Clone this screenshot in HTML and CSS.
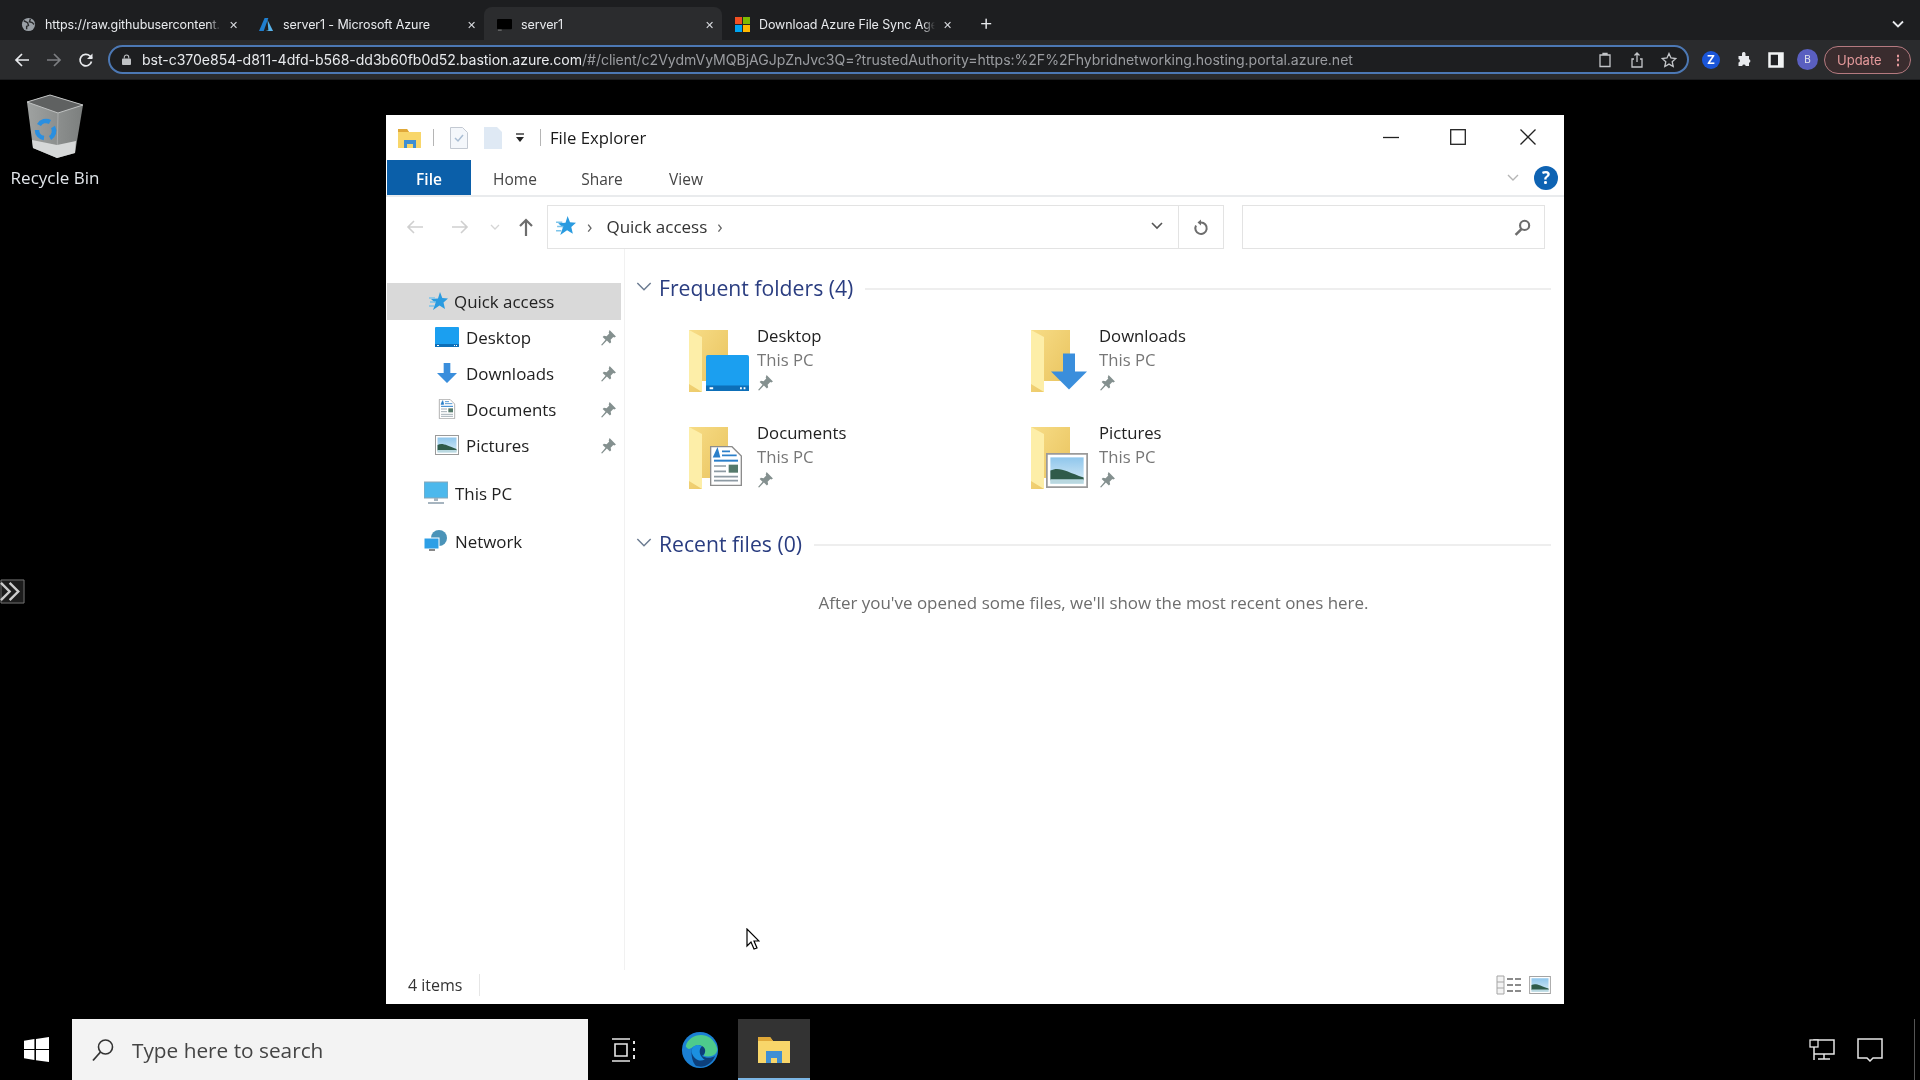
FILE: index.html
```html
<!DOCTYPE html>
<html>
<head>
    <meta charset="utf-8" />
    <title>server1</title>
    <link rel="stylesheet" href="styles.css">
</head>
<body>
    <svg class="defs" width="0" height="0">
        <defs>
            <linearGradient id="folderback" x1="0" y1="0" x2="1" y2="1">
                <stop offset="0" stop-color="#f7dc86"/>
                <stop offset="1" stop-color="#e8c25c"/>
            </linearGradient>
            <linearGradient id="sky" x1="0" y1="0" x2="0" y2="1">
                <stop offset="0" stop-color="#8fc6ec"/>
                <stop offset="1" stop-color="#d8ecf6"/>
            </linearGradient>
            <linearGradient id="binbody" x1="0" y1="0" x2="1" y2="0">
                <stop offset="0" stop-color="#9fa2a1"/>
                <stop offset="1" stop-color="#7c7f7e"/>
            </linearGradient>
            <symbol id="pin" viewBox="0 0 16 16">
                <path d="M9 1l6 6-1.500 1-1-.5-2.500 2.500.5 2.500-1.200 1.200-2.800-2.800L2 15.500 1 15l4.200-4.800-2.700-2.700L3.700 6.300l2.500.5 2.500-2.500-.5-1z" fill="#84908f"/>
            </symbol>
            <symbol id="star" viewBox="0 0 20 20">
                <path d="M12 0l2.300 6 5.700.5-4.500 4 1.500 6.500-5.500-3.500L5 18l2.500-7L3 7l7-.5z" fill="#2a9be0"/>
                <path d="M1 6h6M2 10h6M1 14h5" stroke="#7cc4ea" stroke-width="1.500"/>
            </symbol>
            <symbol id="bigfolder" viewBox="0 0 62 62">
                <path d="M1 0h39v51H14v11H1z" fill="url(#folderback)"/>
                <path d="M1 0l13 7v55L1 54z" fill="#fdeea8"/>
            </symbol>
            <symbol id="picture" viewBox="0 0 24 20">
                <rect x=".5" y=".5" width="23" height="19" fill="#fff" stroke="#9a9a9a"/>
                <rect x="2.500" y="2.500" width="19" height="15" fill="url(#sky)"/>
                <path d="M2.500 10c5-2.500 9 .5 19 4v1.500h-19z" fill="#2f5b4a"/>
                <path d="M2.500 15h19v2.500h-19z" fill="#b9d8e0"/>
            </symbol>
            <symbol id="document" viewBox="0 0 24 30">
                <path d="M.5.5h16l7 7v22H.5z" fill="#fff" stroke="#8c8c8c"/>
                <path d="M3 8l2.500-5.500L7 8H3zM9 4h6M9 7h11" stroke="#2b7fc9" stroke-width="1.200" fill="#2b7fc9"/>
                <path d="M3 11h18" stroke="#2b7fc9" stroke-width="1.500"/>
                <path d="M3 15h9M3 19h9M3 23h18M3 26h18" stroke="#8d9aa3" stroke-width="1.200"/>
                <rect x="14" y="14" width="7" height="6" fill="#557a6b"/>
            </symbol>
            <symbol id="desk" viewBox="0 0 24 20">
                <rect width="24" height="20" rx="1" fill="#1b9ff0"/>
                <path d="M0 17h24v3H0z" fill="#0d6fb8"/>
                <path d="M2 18.500h2M19 18.500h1M21 18.500h1" stroke="#fff"/>
            </symbol>
            <symbol id="down" viewBox="0 0 24 24">
                <path d="M8 0h8v12h8L12 24 0 12h8z" fill="#3a8edc"/>
            </symbol>
        </defs>
    </svg>

    <div class="chrome">
        <div class="tabstrip">
            <div class="tab">
                <svg class="fav" viewBox="0 0 16 16"><circle cx="8" cy="8" r="7" fill="#9aa0a6"/><path d="M3 4l4 2 1 3-2 1v3M10 2l-1 3 3 1 2 2" stroke="#2a2b2d" stroke-width="1.500" fill="none"/></svg>
                <span class="tabtitle tabfade">https://raw.githubusercontent.</span>
                <span class="tabx">✕</span>
            </div>
            <div class="tab">
                <svg class="fav" viewBox="0 0 16 16"><path d="M6 1h4l-5 14H0z" fill="#1f7fd0"/><path d="M9 3l6 12H7l3-1z" fill="#58b3ea"/></svg>
                <span class="tabtitle">server1 - Microsoft Azure</span>
                <span class="tabx">✕</span>
            </div>
            <div class="tab tab-active">
                <svg class="fav" viewBox="0 0 16 16"><rect y="2" width="16" height="11" rx="1" fill="#000"/><path d="M1 14h4" stroke="#888"/></svg>
                <span class="tabtitle">server1</span>
                <span class="tabx">✕</span>
            </div>
            <div class="tab">
                <svg class="fav" viewBox="0 0 16 16"><rect width="7.500" height="7.500" fill="#f25022"/><rect x="8.500" width="7.500" height="7.500" fill="#7fba00"/><rect y="8.500" width="7.500" height="7.500" fill="#00a4ef"/><rect x="8.500" y="8.500" width="7.500" height="7.500" fill="#ffb900"/></svg>
                <span class="tabtitle tabfade">Download Azure File Sync Age</span>
                <span class="tabx">✕</span>
            </div>
            <span class="newtab">+</span>
            <svg class="tablist" viewBox="0 0 12 8"><path d="M1 1.500l5 5 5-5" stroke="#e8eaed" stroke-width="1.800" fill="none"/></svg>
        </div>
        <div class="toolbar">
            <svg class="tbicon" viewBox="0 0 16 16"><path d="M15 8H2M8 2L2 8l6 6" stroke="#e8eaed" stroke-width="1.700" fill="none"/></svg>
            <svg class="tbicon" viewBox="0 0 16 16"><path d="M1 8h13M8 2l6 6-6 6" stroke="#7d7f82" stroke-width="1.700" fill="none"/></svg>
            <svg class="tbicon" viewBox="0 0 16 16"><path d="M13.500 9.500A5.800 5.800 0 1 1 12 4l2 2" stroke="#e8eaed" stroke-width="1.700" fill="none"/><path d="M14.500 1.500v5.500H9z" fill="#e8eaed"/></svg>
            <div class="omnibox">
                <svg class="lock" viewBox="0 0 10 12"><path d="M2.500 5V3.500a2.500 2.500 0 0 1 5 0V5" stroke="#c0c2c5" fill="none" stroke-width="1.200"/><rect y="5" width="10" height="7" rx="1" fill="#c0c2c5"/></svg>
                <span class="url">bst-c370e854-d811-4dfd-b568-dd3b60fb0d52.bastion.azure.com<span class="urlrest">/#/client/c2VydmVyMQBjAGJpZnJvc3Q=?trustedAuthority=https:%2F%2Fhybridnetworking.hosting.portal.azure.net</span></span>
                <div class="omniicons">
                    <svg viewBox="0 0 16 16"><path d="M3 3h10v11.500H3zM6 3V1.500h4V3" stroke="#c4c6c9" stroke-width="1.300" fill="none"/></svg>
                    <svg viewBox="0 0 16 16"><path d="M5 7H3v8h10V7h-2M8 10V1M5.500 3.500L8 1l2.500 2.500" stroke="#c4c6c9" stroke-width="1.300" fill="none"/></svg>
                    <svg viewBox="0 0 16 16"><path d="M8 1.500l2 4.500 4.800.5-3.600 3.200 1 4.800L8 12.100l-4.200 2.400 1-4.800L1.200 6.500 6 6z" stroke="#c4c6c9" stroke-width="1.300" fill="none"/></svg>
                </div>
            </div>
            <div class="exts">
                <span class="zext">Z</span>
                <svg viewBox="0 0 16 16"><path d="M6 1.500a1.800 1.800 0 0 1 3.500 0V4h3.500v3.200a1.800 1.800 0 0 1 0 3.500V14H9.700a1.800 1.800 0 0 0-3.500 0H2.500v-3.500a1.800 1.800 0 0 0 0-3.500V4H6z" fill="#e8eaed"/></svg>
                <svg viewBox="0 0 16 16"><rect x="1.500" y="1.500" width="13" height="13" fill="#202124" stroke="#f1f3f4" stroke-width="2.500"/><rect x="10" y="1" width="5" height="14" fill="#f1f3f4"/></svg>
                <span class="avatar">B</span>
            </div>
            <div class="update">Update<span class="dots">⋮</span></div>
        </div>
    </div>

    <div class="desktop">
        <div class="recycle">
            <svg class="binicon" viewBox="0 0 60 68">
                <path d="M2 9L25 2l33 10-8 48-18 5-24-10z" fill="url(#binbody)"/>
                <path d="M2 9L25 2l33 10-25 8z" fill="#5f6161" stroke="#c0c2c2"/>
                <path d="M33 20l-1 45" stroke="#a9abab"/>
                <path d="M7 47l25 5 19-4-1 12-18 5-24-10z" fill="#d6d8d8"/>
                <path d="M14 32a8 8 0 0 1 11-3M28 34a8 8 0 0 1-3 11M19 45a8 8 0 0 1-7-8" stroke="#2a8fe0" stroke-width="4.500" fill="none"/>
            </svg>
            <span>Recycle Bin</span>
        </div>
        <svg class="sidetab" viewBox="0 0 26 26"><path d="M1 1h24v24H1z" fill="#1c1c1c" stroke="#777"/><path d="M1 4l9 9-9 9M10 4l9 9-9 9" stroke="#ccc" stroke-width="2.500" fill="none"/></svg>

        <div class="explorer">
            <div class="titlebar">
                <svg class="appicon" viewBox="0 0 24 20"><path d="M0 1h9l2 3h12v16H0z" fill="#f8d66a"/><path d="M0 1h9l2 3H0z" fill="#e0a838"/><path d="M6 20v-8h12v8h-3v-4H9v4z" fill="#3f8fd4"/></svg>
                <span class="tsep"></span>
                <svg class="qat" viewBox="0 0 18 22"><path d="M.5.5h12l5 5v16H.5z" fill="#f4f7fb" stroke="#c3c9d2"/><path d="M5 11l3 3 5-6" stroke="#a9bdd3" stroke-width="1.500" fill="none"/></svg>
                <svg class="qat qat2" viewBox="0 0 18 22"><path d="M0 0h13l5 5v17H0z" fill="#dfe9f4"/></svg>
                <svg class="qatdrop" viewBox="0 0 10 10"><path d="M1 1h8" stroke="#222" stroke-width="1.300"/><path d="M1 4h8L5 9z" fill="#222"/></svg>
                <span class="tsep tsep2"></span>
                <span class="wintitle">File Explorer</span>
                <div class="wincontrols">
                    <svg viewBox="0 0 16 16"><path d="M0 8.500h16" stroke="#222" stroke-width="1.300"/></svg>
                    <svg viewBox="0 0 16 16"><rect x=".7" y=".7" width="14.600" height="14.600" fill="none" stroke="#222" stroke-width="1.300"/></svg>
                    <svg class="winclose" viewBox="0 0 16 16"><path d="M.5.5l15 15M15.500.5l-15 15" stroke="#222" stroke-width="1.300"/></svg>
                </div>
            </div>
            <div class="ribbon">
                <span class="rtab rtab-file">File</span>
                <span class="rtab rtab-home">Home</span>
                <span class="rtab rtab-share">Share</span>
                <span class="rtab rtab-view">View</span>
                <svg class="collapse" viewBox="0 0 12 8"><path d="M1 1l5 5 5-5" stroke="#b5b5b5" stroke-width="1.400" fill="none"/></svg>
                <span class="help">?</span>
            </div>
            <div class="addressrow">
                <svg class="nav nav-back" viewBox="0 0 18 16"><path d="M17 8H2M8 2L2 8l6 6" stroke="#cfcfcf" stroke-width="1.600" fill="none"/></svg>
                <svg class="nav nav-fwd" viewBox="0 0 18 16"><path d="M1 8h15M10 2l6 6-6 6" stroke="#cfcfcf" stroke-width="1.600" fill="none"/></svg>
                <svg class="nav nav-drop" viewBox="0 0 10 6"><path d="M1 1l4 4 4-4" stroke="#d5d5d5" stroke-width="1.300" fill="none"/></svg>
                <svg class="nav nav-up" viewBox="0 0 16 18"><path d="M8 18V2M2 8l6-6 6 6" stroke="#6d6d6d" stroke-width="2.200" fill="none"/></svg>
                <div class="addressbox">
                    <svg class="crumbstar"><use href="#star"/></svg>
                    <span class="crumbsep">›</span>
                    <span class="crumb">Quick access</span>
                    <span class="crumbsep crumbsep2">›</span>
                    <svg class="addrdrop" viewBox="0 0 12 8"><path d="M1 1l5 5 5-5" stroke="#555" stroke-width="1.600" fill="none"/></svg>
                </div>
                <div class="refreshbox">
                    <svg viewBox="0 0 16 16"><path d="M8 3A5.700 5.700 0 1 1 3 6" stroke="#6d6d6d" stroke-width="2" fill="none"/><path d="M8 0v6L4.500 3z" fill="#6d6d6d"/></svg>
                </div>
                <div class="searchbox">
                    <svg viewBox="0 0 16 16"><circle cx="10" cy="6" r="4.300" stroke="#6d6d6d" stroke-width="2" fill="none"/><path d="M7 9.500L1.500 15" stroke="#6d6d6d" stroke-width="2.400"/></svg>
                </div>
            </div>
            <div class="panes">
                <div class="navpane">
                    <div class="navitem navitem-sel">
                        <svg class="navicon navicon-star"><use href="#star"/></svg>
                        <span>Quick access</span>
                    </div>
                    <div class="navitem navitem-sub">
                        <svg class="navicon"><use href="#desk"/></svg>
                        <span>Desktop</span>
                        <svg class="navpin"><use href="#pin"/></svg>
                    </div>
                    <div class="navitem navitem-sub">
                        <svg class="navicon"><use href="#down"/></svg>
                        <span>Downloads</span>
                        <svg class="navpin"><use href="#pin"/></svg>
                    </div>
                    <div class="navitem navitem-sub">
                        <svg class="navicon"><use href="#document"/></svg>
                        <span>Documents</span>
                        <svg class="navpin"><use href="#pin"/></svg>
                    </div>
                    <div class="navitem navitem-sub">
                        <svg class="navicon"><use href="#picture"/></svg>
                        <span>Pictures</span>
                        <svg class="navpin"><use href="#pin"/></svg>
                    </div>
                    <div class="navitem navitem-top">
                        <svg class="navicon navicon-pc" viewBox="0 0 24 24"><rect y="1" width="24" height="16" fill="#4cb8ec" stroke="#8aa6b6"/><path d="M10 17h4v3h-4zM4 21h16v2H4z" fill="#a6b4bf"/></svg>
                        <span>This PC</span>
                    </div>
                    <div class="navitem navitem-top navitem-net">
                        <svg class="navicon navicon-pc" viewBox="0 0 24 24"><circle cx="15" cy="9" r="8" fill="#4a93b8"/><rect y="9" width="15" height="11" fill="#2d9fe6" stroke="#fff"/><path d="M5 21h6" stroke="#888" stroke-width="2"/></svg>
                        <span>Network</span>
                    </div>
                </div>
                <div class="content">
                    <div class="grouphead">
                        <svg viewBox="0 0 14 9"><path d="M1 1l6 6 6-6" stroke="#6a7a90" stroke-width="1.300" fill="none"/></svg>
                        <span>Frequent folders (4)</span>
                        <i></i>
                    </div>
                    <div class="tiles">
                        <div class="tile">
                            <div class="tileicon">
                                <svg class="tfolder"><use href="#bigfolder"/></svg>
                                <svg class="over over-desk"><use href="#desk"/></svg>
                            </div>
                            <div class="tiletext"><b>Desktop</b><span>This PC</span><svg class="tilepin"><use href="#pin"/></svg></div>
                        </div>
                        <div class="tile">
                            <div class="tileicon">
                                <svg class="tfolder"><use href="#bigfolder"/></svg>
                                <svg class="over over-down"><use href="#down"/></svg>
                            </div>
                            <div class="tiletext"><b>Downloads</b><span>This PC</span><svg class="tilepin"><use href="#pin"/></svg></div>
                        </div>
                        <div class="tile">
                            <div class="tileicon">
                                <svg class="tfolder"><use href="#bigfolder"/></svg>
                                <svg class="over over-doc"><use href="#document"/></svg>
                            </div>
                            <div class="tiletext"><b>Documents</b><span>This PC</span><svg class="tilepin"><use href="#pin"/></svg></div>
                        </div>
                        <div class="tile">
                            <div class="tileicon">
                                <svg class="tfolder"><use href="#bigfolder"/></svg>
                                <svg class="over over-pic"><use href="#picture"/></svg>
                            </div>
                            <div class="tiletext"><b>Pictures</b><span>This PC</span><svg class="tilepin"><use href="#pin"/></svg></div>
                        </div>
                    </div>
                    <div class="grouphead grouphead-recent">
                        <svg viewBox="0 0 14 9"><path d="M1 1l6 6 6-6" stroke="#6a7a90" stroke-width="1.300" fill="none"/></svg>
                        <span>Recent files (0)</span>
                        <i></i>
                    </div>
                    <p class="emptymsg">After you've opened some files, we'll show the most recent ones here.</p>
                </div>
            </div>
            <div class="statusbar">
                <span class="itemcount">4 items</span>
                <svg class="viewicon" viewBox="0 0 26 20"><path d="M1 1h7v18H1zM1 7h7M1 13h7" stroke="#a5a5a5" fill="#f3f3f3"/><path d="M11 4h6M19 4h6M11 10h6M19 10h6M11 16h6M19 16h6" stroke="#666" stroke-width="1.500"/></svg>
                <svg class="viewicon viewicon-pic"><use href="#picture"/></svg>
            </div>
            <svg class="cursor" viewBox="0 0 14 22"><path d="M1 1v17l4-4 3 7 3-1-3-7h5z" fill="#fff" stroke="#000" stroke-width="1.200"/></svg>
        </div>
    </div>

    <div class="taskbar">
        <svg class="winlogo" viewBox="0 0 24 24"><path d="M0 3.500l10-1.500v9.500H0zM11.500 1.800L24 0v11.500H11.500zM0 12.500h10V22L0 20.500zM11.500 12.500H24V24l-12.500-1.800z" fill="#fff"/></svg>
        <div class="tasksearch">
            <svg viewBox="0 0 24 24"><circle cx="14.500" cy="9" r="7" fill="none" stroke="#333" stroke-width="1.600"/><path d="M9.500 14L2 22.500" stroke="#333" stroke-width="1.800"/></svg>
            <span>Type here to search</span>
        </div>
        <svg class="taskview" viewBox="0 0 26 24"><path d="M1 1h18M1 23h18M4 6h12v12H4z" stroke="#e6e6e6" stroke-width="1.600" fill="none"/><path d="M23 3v3M23 10v3M23 17v4" stroke="#e6e6e6" stroke-width="2"/></svg>
        <svg class="edge" viewBox="0 0 40 40">
            <circle cx="20" cy="20" r="19" fill="#1b80d4"/>
            <path d="M5 16C8 2 32-2 38 18c1 8-8 10-14 8 4-8-6-14-13-8-3 2-5 0-6-2z" fill="#4ecb8c"/>
            <path d="M11 22c0-7 8-9 13-5 3 3 1 8-2 9 4 3 10 3 14 0-4 10-14 14-21 10-3-4-4-9-4-14z" fill="#0d3f7a"/>
            <path d="M22 16c-5-3-11 0-11 6 2 7 8 11 14 8-4-2-8-9-3-14z" fill="#1b90e0"/>
        </svg>
        <div class="taskapp">
            <svg viewBox="0 0 32 28"><path d="M0 2h12l3 4h17v22H0z" fill="#f8d66a"/><path d="M0 2h12l3 4H0z" fill="#e0a838"/><path d="M8 28V16h16v12h-5v-5h-6v5z" fill="#3f8fd4"/></svg>
        </div>
        <svg class="traynet" viewBox="0 0 26 24"><path d="M5 2h20v14H5zM15 16v5M9 21h12M5 8v14" stroke="#e6e6e6" stroke-width="1.500" fill="none"/><rect x="1" y="2" width="8" height="7" fill="#000" stroke="#e6e6e6" stroke-width="1.300"/></svg>
        <svg class="traynote" viewBox="0 0 26 24"><path d="M1 1h24v19h-9l-3 3-3-3H1z" stroke="#e6e6e6" stroke-width="1.500" fill="none"/></svg>
        <span class="showdesk"></span>
    </div>
</body>
</html>
```

FILE: styles.css
```css
*
{
    box-sizing: border-box;
}

html, body
{
    margin: 0;
    height: 100%;
}

body
{
    width: 1920px;
    height: 1080px;
    overflow: hidden;
    display: flex;
    flex-direction: column;
    background: #000;
    font-family: "Open Sans", "Noto Sans", sans-serif;
    filter: blur(.4px);
}

.defs
{
    position: absolute;
}

/* browser */
.chrome
{
    height: 80px;
    flex: none;
    font-family: "Inter", "Liberation Sans", sans-serif;
    color: #e8eaed;
    background: #1d1e20;
}

.tabstrip
{
    height: 40px;
    padding: 7px 0 0 8px;
    display: flex;
    align-items: stretch;
    background: #1d1e20;
}

.tab
{
    width: 238px;
    display: flex;
    align-items: center;
    padding: 2px 8px 0 13px;
    border-radius: 8px 8px 0 0;
    font-size: 12.500px;
    letter-spacing: -.1px;
}

.tab-active
{
    background: #2b2c2e;
}

.fav
{
    width: 15px;
    height: 15px;
    flex: none;
    margin-right: 9px;
}

.tabtitle
{
    flex: 1;
    overflow: hidden;
    white-space: nowrap;
}

.tabfade
{
    -webkit-mask-image: linear-gradient(to right, #000 93%, transparent);
    mask-image: linear-gradient(to right, #000 93%, transparent);
}

.tabx
{
    font-size: 11px;
    margin-left: 8px;
    color: #d8dade;
}

.newtab
{
    margin-left: 19px;
    font-size: 22px;
    line-height: 30px;
    font-weight: 300;
}

.tablist
{
    width: 12px;
    height: 8px;
    margin: 13px 16px 0 auto;
}

.toolbar
{
    height: 39px;
    display: flex;
    align-items: center;
    padding-left: 14px;
    background: #2a2b2d;
}

.tbicon
{
    width: 16px;
    height: 16px;
    margin-right: 16px;
    flex: none;
}

.omnibox
{
    width: 1581px;
    height: 29px;
    margin-left: -2px;
    display: flex;
    align-items: center;
    padding: 0 10px 0 12px;
    border: 2px solid #4c78b4;
    border-radius: 15px;
    background: #1d1e20;
}

.lock
{
    width: 9px;
    height: 11px;
    margin-right: 11px;
}

.url
{
    font-size: 14.100px;
    white-space: nowrap;
    overflow: hidden;
    letter-spacing: -.06px;
}

.urlrest
{
    color: #9a9ca0;
}

.omniicons
{
    margin-left: auto;
    display: flex;
    gap: 16px;
    flex: none;
}

.omniicons svg
{
    width: 16px;
    height: 16px;
}

.exts
{
    width: 135px;
    display: flex;
    align-items: center;
    gap: 16px;
    padding-left: 14px;
    flex: none;
}

.exts svg
{
    width: 16px;
    height: 16px;
}

.zext
{
    width: 18px;
    height: 18px;
    margin-left: -1px;
    border-radius: 50%;
    background: #1a55d8;
    color: #fff;
    font-size: 12px;
    font-weight: 700;
    line-height: 18px;
    text-align: center;
}

.avatar
{
    width: 21px;
    height: 21px;
    margin-left: -3px;
    border-radius: 50%;
    background: #5a5fc0;
    font-size: 10px;
    line-height: 21px;
    text-align: center;
}

.update
{
    width: 87px;
    height: 28px;
    display: flex;
    align-items: center;
    justify-content: space-between;
    padding: 0 5px 0 12px;
    border: 1px solid #b57a80;
    border-radius: 14px;
    background: #3a2c2e;
    color: #e59a9c;
    font-size: 13px;
    flex: none;
}

.dots
{
    font-size: 14px;
    font-weight: 700;
}

/* desktop */
.desktop
{
    flex: 1;
    position: relative;
    background: #000;
}

.recycle
{
    position: absolute;
    left: 0;
    top: 13px;
    width: 110px;
    text-align: center;
    color: #e2e6ea;
    font-size: 17px;
}

.binicon
{
    width: 60px;
    height: 68px;
    display: block;
    margin: 0 0 5px 25px;
}

.sidetab
{
    position: absolute;
    left: 0;
    top: 499px;
    width: 25px;
    height: 25px;
}

.explorer
{
    position: absolute;
    left: 386px;
    top: 35px;
    width: 1178px;
    height: 889px;
    display: flex;
    flex-direction: column;
    background: #fff;
    color: #1a1a1a;
}

.titlebar
{
    height: 45px;
    flex: none;
    display: flex;
    align-items: center;
    padding-left: 12px;
}

.appicon
{
    width: 24px;
    height: 20px;
}

.tsep
{
    width: 1px;
    height: 17px;
    margin: 0 16px 0 11px;
    background: #b5b5b5;
}

.tsep2
{
    margin: 0 9px 0 15px;
}

.qat
{
    width: 18px;
    height: 22px;
}

.qat2
{
    margin-left: 16px;
}

.qatdrop
{
    width: 10px;
    height: 10px;
    margin-left: 13px;
}

.wintitle
{
    font-size: 16.700px;
}

.wincontrols
{
    margin-left: auto;
    display: flex;
    gap: 51px;
    padding-right: 28px;
    margin-top: -1px;
}

.wincontrols svg
{
    width: 16px;
    height: 16px;
}

.wincontrols .winclose
{
    margin-left: 3px;
}

.ribbon
{
    height: 37px;
    flex: none;
    display: flex;
    align-items: center;
    border-bottom: 2px solid #e9ebed;
    font-size: 15.500px;
    color: #444;
}

.rtab
{
    height: 100%;
    padding-top: 3px;
    display: flex;
    align-items: center;
    justify-content: center;
}

.rtab-file
{
    width: 84px;
    margin-left: 1px;
    background: #0b5fa9;
    color: #fff;
    font-weight: 600;
}

.rtab-home
{
    width: 88px;
}

.rtab-share
{
    width: 86px;
}

.rtab-view
{
    width: 82px;
}

.collapse
{
    width: 12px;
    height: 8px;
    margin-left: auto;
}

.help
{
    width: 24px;
    height: 24px;
    margin: 0 6px 0 15px;
    border-radius: 50%;
    background: #0e63b3;
    color: #fff;
    font-size: 17px;
    font-weight: 700;
    line-height: 24px;
    text-align: center;
}

.addressrow
{
    height: 44px;
    margin-top: 8px;
    flex: none;
    display: flex;
    align-items: center;
}

.nav
{
    flex: none;
}

.nav-back
{
    width: 18px;
    height: 16px;
    margin-left: 20px;
}

.nav-fwd
{
    width: 18px;
    height: 16px;
    margin-left: 27px;
}

.nav-drop
{
    width: 10px;
    height: 6px;
    margin-left: 21px;
}

.nav-up
{
    width: 16px;
    height: 18px;
    margin-left: 18px;
}

.addressbox
{
    width: 632px;
    height: 100%;
    margin-left: 13px;
    display: flex;
    align-items: center;
    border: 1px solid #e3e3e3;
    padding: 0 0 2px 7px;
    font-size: 17px;
    color: #333;
}

.crumbstar
{
    width: 21px;
    height: 21px;
}

.crumbsep
{
    margin: 0 14px 0 11px;
    color: #666;
    font-size: 18px;
}

.crumbsep2
{
    margin-left: 10px;
}

.addrdrop
{
    width: 12px;
    height: 8px;
    margin-left: auto;
    margin-right: 15px;
}

.refreshbox
{
    width: 45px;
    height: 100%;
    display: flex;
    align-items: center;
    justify-content: center;
    border: 1px solid #e3e3e3;
    border-left: 0;
}

.refreshbox svg
{
    width: 16px;
    height: 17px;
}

.searchbox
{
    width: 303px;
    height: 100%;
    margin-left: 18px;
    display: flex;
    align-items: center;
    justify-content: flex-end;
    padding-right: 13px;
    border: 1px solid #e3e3e3;
}

.searchbox svg
{
    width: 17px;
    height: 17px;
}

.panes
{
    flex: 1;
    display: flex;
    min-height: 0;
}

.navpane
{
    width: 239px;
    flex: none;
    padding: 34px 4px 0 1px;
    border-right: 1px solid #f1f1f1;
    font-size: 16.900px;
    color: #222;
}

.navitem
{
    height: 36px;
    display: flex;
    align-items: center;
}

.navitem-sel
{
    height: 37px;
    margin: 0 -1px -1px 0;
    padding-left: 41px;
    background: #d9d9d9;
}

.navitem-sub
{
    padding-left: 48px;
}

.navitem-top
{
    height: 38px;
    margin-top: 11px;
    padding-left: 37px;
}

.navitem-net
{
    margin-top: 10px;
}

.navicon
{
    width: 24px;
    height: 20px;
    margin-right: 7px;
    flex: none;
}

.navicon-star
{
    width: 20px;
    margin-right: 6px;
}

.navicon-pc
{
    width: 24px;
    height: 24px;
    margin-right: 7px;
}

.navpin
{
    width: 17px;
    height: 17px;
    margin-left: auto;
    margin-right: 3px;
}

.content
{
    flex: 1;
    padding: 24px 13px 0 11px;
}

.grouphead
{
    height: 28px;
    display: flex;
    align-items: center;
    color: #2a3d80;
    font-size: 21.200px;
}

.grouphead svg
{
    width: 16px;
    height: 10px;
    margin-right: 7px;
}

.grouphead i
{
    flex: 1;
    height: 2px;
    margin: 4px 0 0 12px;
    background: #eeeeee;
}

.grouphead-recent
{
    margin-top: 22px;
}

.tiles
{
    display: grid;
    grid-template-columns: 342px 342px;
    grid-auto-rows: 97px;
    margin-top: 12px;
    padding-left: 52px;
    padding-top: 11px;
    margin-bottom: -11px;
}

.tile
{
    display: flex;
    gap: 8px;
}

.tileicon
{
    position: relative;
    width: 61px;
    height: 62px;
    flex: none;
    margin-top: 6px;
}

.tfolder
{
    width: 62px;
    height: 62px;
    display: block;
}

.over
{
    position: absolute;
}

.over-desk
{
    left: 18px;
    top: 24px;
    width: 43px;
    height: 38px;
}

.over-down
{
    left: 21px;
    top: 22px;
    width: 36px;
    height: 39px;
}

.over-doc
{
    left: 22px;
    top: 18px;
    width: 32px;
    height: 42px;
}

.over-pic
{
    left: 15px;
    top: 26px;
    width: 44px;
    height: 35px;
}

.tiletext
{
    display: flex;
    flex-direction: column;
    font-size: 16.700px;
    line-height: 24px;
    color: #222;
}

.tiletext b
{
    font-weight: 400;
}

.tiletext span
{
    color: #777;
}

.tilepin
{
    width: 17px;
    height: 17px;
    margin-top: 2px;
}

.emptymsg
{
    margin: 34px 0 0;
    text-align: center;
    color: #6d6d6d;
    font-size: 16.950px;
}

.statusbar
{
    height: 34px;
    flex: none;
    display: flex;
    align-items: center;
    padding: 0 13px 5px 22px;
    font-size: 16px;
    color: #333;
}

.itemcount
{
    padding-right: 17px;
    margin-right: auto;
    border-right: 1px solid #e6e6e6;
}

.viewicon
{
    width: 26px;
    height: 20px;
    margin-left: 7px;
}

.viewicon-pic
{
    width: 22px;
    height: 18px;
}

.cursor
{
    position: absolute;
    left: 360px;
    top: 813px;
    width: 14px;
    height: 22px;
}

/* taskbar */
.taskbar
{
    height: 61px;
    flex: none;
    display: flex;
    align-items: center;
    position: relative;
    background: #000;
}

.winlogo
{
    width: 25px;
    height: 25px;
    margin-left: 24px;
}

.tasksearch
{
    width: 516px;
    height: 100%;
    margin-left: 23px;
    display: flex;
    align-items: center;
    padding-left: 19px;
    background: #f3f3f3;
    color: #444;
    font-size: 20.800px;
}

.tasksearch svg
{
    width: 24px;
    height: 24px;
    margin-right: 17px;
}

.taskview
{
    width: 26px;
    height: 24px;
    margin-left: 23px;
}

.edge
{
    width: 38px;
    height: 38px;
    margin-left: 44px;
}

.taskapp
{
    width: 72px;
    height: 100%;
    margin-left: 19px;
    display: flex;
    align-items: center;
    justify-content: center;
    background: #333;
    border-bottom: 2px solid #7cb6e4;
}

.taskapp svg
{
    width: 32px;
    height: 28px;
}

.traynet
{
    width: 26px;
    height: 24px;
    margin-left: auto;
}

.traynote
{
    width: 26px;
    height: 24px;
    margin-left: 22px;
    margin-right: 37px;
}

.showdesk
{
    position: absolute;
    right: 5px;
    top: 0;
    bottom: 0;
    width: 1px;
    background: #555;
}
```
